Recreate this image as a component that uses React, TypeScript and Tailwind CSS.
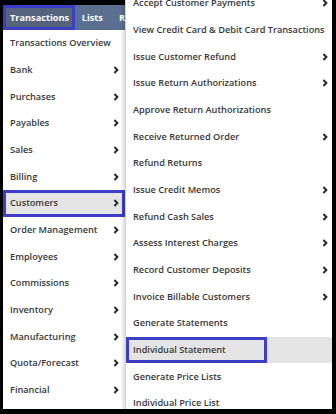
import React from 'react';

const LEFT_ITEMS = [
    'Bank',
    'Purchases',
    'Payables',
    'Sales',
    'Billing',
    'Customers',
    'Order Management',
    'Employees',
    'Commissions',
    'Inventory',
    'Manufacturing',
    'Quota/Forecast',
    'Financial'
];

const SUB_ITEMS = [
    { label: 'Accept Customer Payments', arrow: true },
    { label: 'View Credit Card & Debit Card Transactions', arrow: false },
    { label: 'Issue Customer Refund', arrow: true },
    { label: 'Issue Return Authorizations', arrow: true },
    { label: 'Approve Return Authorizations', arrow: false },
    { label: 'Receive Returned Order', arrow: true },
    { label: 'Refund Returns', arrow: false },
    { label: 'Issue Credit Memos', arrow: true },
    { label: 'Refund Cash Sales', arrow: true },
    { label: 'Assess Interest Charges', arrow: true },
    { label: 'Record Customer Deposits', arrow: true },
    { label: 'Invoice Billable Customers', arrow: true },
    { label: 'Generate Statements', arrow: false },
    { label: 'Individual Statement', arrow: false },
    { label: 'Generate Price Lists', arrow: false },
    { label: 'Individual Price List', arrow: false }
];

function Chevron() {
    return (
        <svg width="6" height="8" viewBox="0 0 6 8" className="shrink-0">
            <polyline points="1.4,1 4.4,4 1.4,7" fill="none" stroke="#262626" strokeWidth="1.9" />
        </svg>
    );
}

export default function App() {
    return (
        <div
            className="w-[336px] h-[414px] bg-black flex pl-[3px] pr-[4px] pb-[5px] overflow-hidden text-[#383838]"
            style={{ fontFamily: '"Open Sans", "Noto Sans", sans-serif' }}
        >
            {/* Left: nav bar + Transactions menu */}
            <div className="w-[122px] shrink-0 flex flex-col pt-[5px]">
                <div className="h-[25px] bg-[#5b6f90] flex items-stretch text-white text-[9.2px] font-bold whitespace-nowrap overflow-hidden">
                    <div className="w-[74px] border-[3px] border-[#3c3fc6] bg-[#56637d] flex items-center pl-[4px]">
                        Transactions
                    </div>
                    <div className="flex items-center pl-[7px]">Lists</div>
                    <div className="flex items-center pl-[16px]">R</div>
                </div>
                <div className="flex-1 bg-white flex flex-col text-[9.2px] font-semibold">
                    <div className="h-[26.67px] flex items-center px-[7px] whitespace-nowrap">Transactions Overview</div>
                    {LEFT_ITEMS.map(item => (
                        <div
                            key={item}
                            className={
                                item === 'Customers'
                                    ? 'h-[26.67px] flex items-center justify-between pl-[4px] pr-[3px] bg-[#e4e4e4] border-[3px] border-[#3c3fc6]'
                                    : 'h-[26.67px] flex items-center justify-between pl-[7px] pr-[6px]'
                            }
                        >
                            <span>{item}</span>
                            <Chevron />
                        </div>
                    ))}
                </div>
            </div>

            {/* Right: Customers submenu */}
            <div className="flex-1 bg-white border-l border-[#d4d4d4] shadow-[-2px_0_3px_rgba(0,0,0,0.15)] overflow-hidden relative z-10">
                <div className="-mt-[10px] flex flex-col text-[9.2px] font-semibold whitespace-nowrap">
                    {SUB_ITEMS.map(item => (
                        <div
                            key={item.label}
                            className={
                                item.label === 'Individual Statement'
                                    ? 'h-[26.67px] flex items-center bg-[#e4e4e4]'
                                    : 'h-[26.67px] flex items-center justify-between pl-[7px] pr-[4px]'
                            }
                        >
                            {item.label === 'Individual Statement' ? (
                                <div className="h-full w-[141px] border-[3px] border-[#3c3fc6] flex items-center pl-[4px]">
                                    {item.label}
                                </div>
                            ) : (
                                <>
                                    <span>{item.label}</span>
                                    {item.arrow && <Chevron />}
                                </>
                            )}
                        </div>
                    ))}
                </div>
            </div>
        </div>
    );
}
